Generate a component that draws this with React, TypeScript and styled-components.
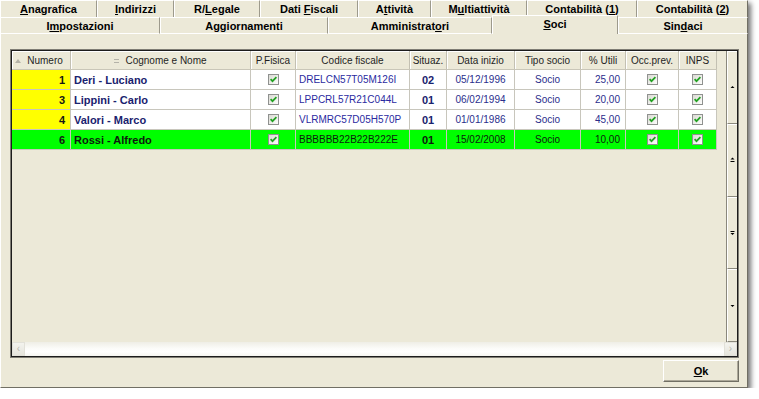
import React from 'react';
import styled, { createGlobalStyle } from 'styled-components';

const GlobalStyle = createGlobalStyle`
  html, body { margin: 0; padding: 0; background: #ffffff; }
  body { font-family: "Liberation Sans", Arial, sans-serif; }
`;

const BEIGE = '#ECE9D8';
const cols = [59, 180, 45, 114, 37, 68, 66, 45, 53, 38];
const colTemplate = cols.map((c) => `${c}px`).join(' ');

const Window = styled.div`
  width: 748px;
  height: 388px;
  background: ${BEIGE};
  display: flex;
  flex-direction: column;
  box-shadow: 3px 3px 5px rgba(0, 0, 0, 0.55);
`;

const TabRow = styled.div<{ $front?: boolean }>`
  display: flex;
  height: 17px;
  position: relative;
  z-index: ${(p) => (p.$front ? 2 : 1)};
`;

const Tab = styled.div<{ $w: number; $selected?: boolean; $front?: boolean }>`
  box-sizing: border-box;
  width: ${(p) => p.$w}px;
  height: ${(p) => (p.$selected ? 19 : 17)}px;
  margin-top: ${(p) => (p.$selected ? -2 : 0)}px;
  background: ${BEIGE};
  border-top: 1px solid #ffffff;
  border-left: 1px solid #ffffff;
  border-right: 1px solid #9d9a8c;
  border-bottom: ${(p) => (p.$front && !p.$selected ? '1px solid #ffffff' : 'none')};
  display: flex;
  align-items: center;
  justify-content: center;
  padding-bottom: ${(p) => (p.$selected ? 3 : 0)}px;
  font-size: 11px;
  font-weight: bold;
  color: #000;
  white-space: nowrap;
  &:last-child {
    border-right: 1px solid #716f64;
  }
`;

const Panel = styled.div`
  flex: 1;
  display: flex;
  flex-direction: column;
  box-sizing: border-box;
  border-left: 1px solid #ffffff;
  border-right: 1px solid #716f64;
  border-bottom: 1px solid #716f64;
  padding: 15px 8px 0 9px;
`;

const GridFrame = styled.div`
  height: 309px;
  box-sizing: border-box;
  border: 1px solid #7f7d74;
`;

const GridInner = styled.div`
  height: 100%;
  box-sizing: border-box;
  border: 1px solid #1c1c1c;
  display: flex;
  flex-direction: column;
`;

const GridMain = styled.div`
  flex: 1;
  display: flex;
  min-height: 0;
`;

const TableArea = styled.div`
  width: 705px;
  display: flex;
  flex-direction: column;
  background: ${BEIGE};
`;

const Filler = styled.div`
  flex: 1;
  background: ${BEIGE};
`;

const HeaderRow = styled.div`
  display: grid;
  grid-template-columns: ${colTemplate};
  height: 18px;
  border-bottom: 1px solid #c9c6b8;
`;

const HeaderCell = styled.div<{ $shift?: number }>`
  box-sizing: border-box;
  border-right: 1px solid #c3c0b2;
  box-shadow: inset 1px 1px 0 #ffffff;
  display: flex;
  align-items: center;
  justify-content: center;
  gap: 6px;
  padding-right: ${(p) => p.$shift || 0}px;
  font-size: 10px;
  color: #1e1e1e;
  white-space: nowrap;
`;

const SortMark = styled.span`
  display: inline-block;
  width: 0;
  height: 0;
  border-left: 3px solid transparent;
  border-right: 3px solid transparent;
  border-bottom: 4px solid #b4b2a8;
  margin-top: 2px;
`;

const EqMark = styled.span`
  display: inline-block;
  width: 5px;
  height: 2px;
  border-top: 1px solid #b4b2a8;
  border-bottom: 1px solid #b4b2a8;
  margin-top: 2px;
`;

const DataRow = styled.div<{ $bg: string }>`
  display: grid;
  grid-template-columns: ${colTemplate};
  height: 20px;
  background: ${(p) => p.$bg};
`;

const Cell = styled.div<{
  $align?: 'left' | 'center' | 'right';
  $bg?: string;
  $bold?: boolean;
  $color?: string;
}>`
  box-sizing: border-box;
  border-right: 1px solid #c8c6bc;
  border-bottom: 1px solid #c8c6bc;
  background: ${(p) => p.$bg || 'transparent'};
  display: flex;
  align-items: center;
  justify-content: ${(p) =>
    p.$align === 'right' ? 'flex-end' : p.$align === 'center' ? 'center' : 'flex-start'};
  padding: 0 ${(p) => (p.$align === 'right' ? 5 : 0)}px 0 ${(p) => (p.$align === 'left' ? 3 : 0)}px;
  font-size: ${(p) => (p.$bold ? 11 : 10)}px;
  font-weight: ${(p) => (p.$bold ? 'bold' : 'normal')};
  color: ${(p) => p.$color || '#1b2470'};
  white-space: nowrap;
  overflow: hidden;
`;

const NavBar = styled.div`
  width: 10px;
  display: flex;
  flex-direction: column;
  border-left: 1px solid #8a887c;
`;

const NavButton = styled.div`
  flex: 1;
  box-sizing: border-box;
  background: ${BEIGE};
  border-left: 1px solid #ffffff;
  border-top: 1px solid #ffffff;
  border-bottom: 1px solid #8a887c;
  display: flex;
  align-items: center;
  justify-content: center;
`;

const HScroll = styled.div`
  height: 14px;
  display: flex;
  background: linear-gradient(to bottom, #efeee6 0%, #fbfbf8 45%, #ffffff 70%, #f6f6f1 100%);
`;

const ScrollTrack = styled.div`
  flex: 1;
`;

const ScrollBtn = styled.div`
  width: 13px;
  box-sizing: border-box;
  background: linear-gradient(to bottom, #f3f3ee, #e6e5dd);
  border: 1px solid #e2e1d9;
  display: flex;
  align-items: center;
  justify-content: center;
  color: #b8b8b0;
  font-size: 10px;
  line-height: 1;
`;

const Footer = styled.div`
  display: flex;
  justify-content: flex-end;
  margin-top: 2px;
`;

const OkButton = styled.div`
  width: 76px;
  height: 22px;
  box-sizing: border-box;
  background: ${BEIGE};
  border-top: 1px solid #ffffff;
  border-left: 1px solid #ffffff;
  border-right: 1px solid #716f64;
  border-bottom: 1px solid #716f64;
  box-shadow: inset -1px -1px 0 #aca899;
  display: flex;
  align-items: center;
  justify-content: center;
  font-size: 11px;
  font-weight: bold;
  color: #000;
`;

const Check: React.FC = () => (
  <svg width="11" height="11" viewBox="0 0 11 11">
    <defs>
      <linearGradient id="cbg" x1="0" y1="0" x2="1" y2="1">
        <stop offset="0" stopColor="#d8d8d0" />
        <stop offset="1" stopColor="#ffffff" />
      </linearGradient>
    </defs>
    <rect x="0.5" y="0.5" width="10" height="10" fill="url(#cbg)" stroke="#8f918f" />
    <path d="M2.6 5.2 L4.5 7.2 L8.4 3.2" stroke="#21a121" strokeWidth="1.7" fill="none" />
  </svg>
);

const NavIcon: React.FC<{ kind: 'up' | 'pgup' | 'pgdn' | 'down' }> = ({ kind }) => (
  <svg width="5" height="6" viewBox="0 0 5 6">
    {kind === 'up' && <path d="M2.5 2 L4.5 4 L0.5 4 Z" fill="#000" />}
    {kind === 'down' && <path d="M0.5 2 L4.5 2 L2.5 4 Z" fill="#000" />}
    {kind === 'pgup' && (
      <>
        <path d="M2.5 0.5 L4.5 2.5 L0.5 2.5 Z" fill="#000" />
        <rect x="0.5" y="4" width="4" height="1" fill="#000" />
      </>
    )}
    {kind === 'pgdn' && (
      <>
        <rect x="0.5" y="1" width="4" height="1" fill="#000" />
        <path d="M0.5 3 L4.5 3 L2.5 5 Z" fill="#000" />
      </>
    )}
  </svg>
);

type Row = {
  num: string;
  name: string;
  cf: string;
  sit: string;
  date: string;
  util: string;
  hl?: boolean;
};

const rows: Row[] = [
  { num: '1', name: 'Deri - Luciano', cf: 'DRELCN57T05M126I', sit: '02', date: '05/12/1996', util: '25,00' },
  { num: '3', name: 'Lippini - Carlo', cf: 'LPPCRL57R21C044L', sit: '01', date: '06/02/1994', util: '20,00' },
  { num: '4', name: 'Valori - Marco', cf: 'VLRMRC57D05H570P', sit: '01', date: '01/01/1986', util: '45,00' },
  { num: '6', name: 'Rossi - Alfredo', cf: 'BBBBBB22B22B222E', sit: '01', date: '15/02/2008', util: '10,00', hl: true },
];

export default function App() {
  return (
    <>
      <GlobalStyle />
      <Window>
        <TabRow>
          <Tab $w={97}><span><u>A</u>nagrafica</span></Tab>
          <Tab $w={77}><span><u>I</u>ndirizzi</span></Tab>
          <Tab $w={86}><span>R/<u>L</u>egale</span></Tab>
          <Tab $w={98}><span>Dati <u>F</u>iscali</span></Tab>
          <Tab $w={73}><span>A<u>t</u>tività</span></Tab>
          <Tab $w={96}><span>M<u>u</u>ltiattività</span></Tab>
          <Tab $w={110}><span>Contabilità (<u>1</u>)</span></Tab>
          <Tab $w={111}><span>Contabilità (<u>2</u>)</span></Tab>
        </TabRow>
        <TabRow $front>
          <Tab $front $w={160}><span>I<u>m</u>postazioni</span></Tab>
          <Tab $front $w={168}><span>Aggiornamenti</span></Tab>
          <Tab $front $w={164}><span>Amministrat<u>o</u>ri</span></Tab>
          <Tab $front $selected $w={126}><span><u>S</u>oci</span></Tab>
          <Tab $front $w={130}><span>Sin<u>d</u>aci</span></Tab>
        </TabRow>
        <Panel>
          <GridFrame>
            <GridInner>
              <GridMain>
                <TableArea>
                  <HeaderRow>
                    <HeaderCell $shift={4}><SortMark />Numero</HeaderCell>
                    <HeaderCell><EqMark />Cognome e Nome</HeaderCell>
                    <HeaderCell>P.Fisica</HeaderCell>
                    <HeaderCell>Codice fiscale</HeaderCell>
                    <HeaderCell>Situaz.</HeaderCell>
                    <HeaderCell>Data inizio</HeaderCell>
                    <HeaderCell>Tipo socio</HeaderCell>
                    <HeaderCell>% Utili</HeaderCell>
                    <HeaderCell>Occ.prev.</HeaderCell>
                    <HeaderCell>INPS</HeaderCell>
                  </HeaderRow>
                  {rows.map((r) => {
                    const c = r.hl ? '#0d1a0d' : undefined;
                    return (
                      <DataRow key={r.num} $bg={r.hl ? '#00ff00' : '#ffffff'}>
                        <Cell $align="right" $bold $bg={r.hl ? '#00ff00' : '#ffff00'} $color="#151515">
                          {r.num}
                        </Cell>
                        <Cell $align="left" $bold $color={c || '#1a226e'}>{r.name}</Cell>
                        <Cell $align="center"><Check /></Cell>
                        <Cell $align="left" $color={c || '#2a2aa0'}>{r.cf}</Cell>
                        <Cell $align="center" $bold $color={c || '#1a226e'}>{r.sit}</Cell>
                        <Cell $align="center" $color={c || '#2a2e8c'}>{r.date}</Cell>
                        <Cell $align="center" $color={c || '#2a2e8c'}>Socio</Cell>
                        <Cell $align="right" $color={c || '#2a2e8c'}>{r.util}</Cell>
                        <Cell $align="center"><Check /></Cell>
                        <Cell $align="center"><Check /></Cell>
                      </DataRow>
                    );
                  })}
                </TableArea>
                <Filler />
                <NavBar>
                  <NavButton><NavIcon kind="up" /></NavButton>
                  <NavButton><NavIcon kind="pgup" /></NavButton>
                  <NavButton><NavIcon kind="pgdn" /></NavButton>
                  <NavButton><NavIcon kind="down" /></NavButton>
                </NavBar>
              </GridMain>
              <HScroll>
                <ScrollBtn>‹</ScrollBtn>
                <ScrollTrack />
                <ScrollBtn>›</ScrollBtn>
              </HScroll>
            </GridInner>
          </GridFrame>
          <Footer>
            <OkButton><span><u>O</u>k</span></OkButton>
          </Footer>
        </Panel>
      </Window>
    </>
  );
}
